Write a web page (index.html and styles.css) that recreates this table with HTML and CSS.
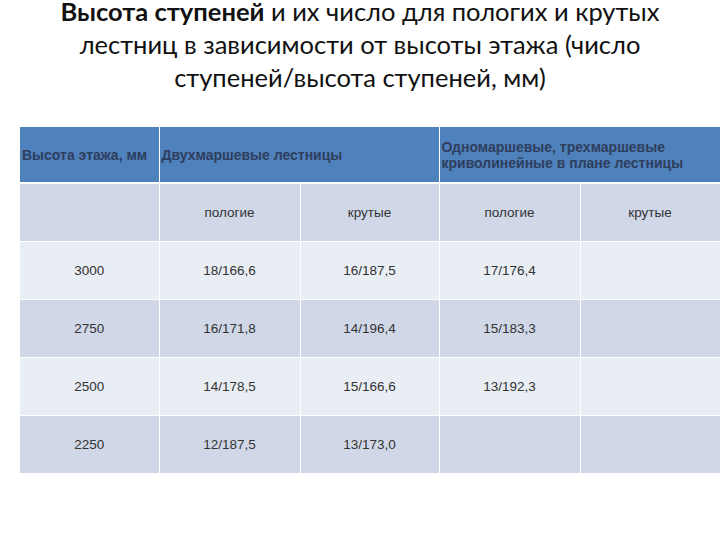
FILE: index.html
```html
<!DOCTYPE html>
<html lang="ru">
<head>
<meta charset="utf-8">
<link rel="stylesheet" href="styles.css">
</head>
<body>
<h1 class="title"><b>Высота ступеней</b> и их число для пологих и крутых<br>лестниц в зависимости от высоты этажа (число<br>ступеней/высота ступеней, мм)</h1>
<table class="grid">
  <colgroup>
    <col class="c1"><col class="c2"><col class="c3"><col class="c4"><col class="c5">
  </colgroup>
  <thead>
    <tr class="head">
      <th>Высота этажа, мм</th>
      <th colspan="2">Двухмаршевые лестницы</th>
      <th colspan="2">Одномаршевые, трехмаршевые криволинейные в плане лестницы</th>
    </tr>
  </thead>
  <tbody>
    <tr class="dark"><td></td><td>пологие</td><td>крутые</td><td>пологие</td><td>крутые</td></tr>
    <tr class="light"><td>3000</td><td>18/166,6</td><td>16/187,5</td><td>17/176,4</td><td></td></tr>
    <tr class="dark"><td>2750</td><td>16/171,8</td><td>14/196,4</td><td>15/183,3</td><td></td></tr>
    <tr class="light"><td>2500</td><td>14/178,5</td><td>15/166,6</td><td>13/192,3</td><td></td></tr>
    <tr class="dark"><td>2250</td><td>12/187,5</td><td>13/173,0</td><td></td><td></td></tr>
  </tbody>
</table>
</body>
</html>
```
FILE: styles.css
```css
html, body {
  margin: 0;
  padding: 0;
  background: #ffffff;
  width: 720px;
  height: 540px;
  overflow: hidden;
}
.title {
  margin: -5px 0 0 0;
  height: 132px;
  font-family: Lato, "Open Sans", sans-serif;
  font-weight: 400;
  font-size: 25.5px;
  line-height: 33px;
  text-align: center;
  color: #111111;
}
.title b {
  font-weight: 700;
}
.grid {
  margin-left: 20px;
  table-layout: fixed;
  width: 700px;
  border-collapse: collapse;
  font-family: "Liberation Sans", Arial, sans-serif;
}
.c1 { width: 139px; }
.c2 { width: 141px; }
.c3 { width: 139px; }
.c4 { width: 141px; }
.c5 { width: 140px; }
.grid th, .grid td {
  border: 1px solid #ffffff;
  padding: 0;
}
.grid td {
  height: 57px;
  text-align: center;
  vertical-align: middle;
  font-size: 13.5px;
  color: #333333;
}
.head th {
  background: #4f81bd;
  height: 55px;
  border-top: 0;
  border-bottom: 2px solid #ffffff;
  text-align: left;
  vertical-align: middle;
  padding-left: 2px;
  font-size: 14px;
  font-weight: 700;
  line-height: 16px;
  color: #2e3e5c;
  white-space: normal;
}
.head th:first-child { border-left: 0; white-space: nowrap; }
.grid td:first-child { border-left: 0; }
.dark td { background: #d0d8e8; }
.light td { background: #e9edf4; }
```
